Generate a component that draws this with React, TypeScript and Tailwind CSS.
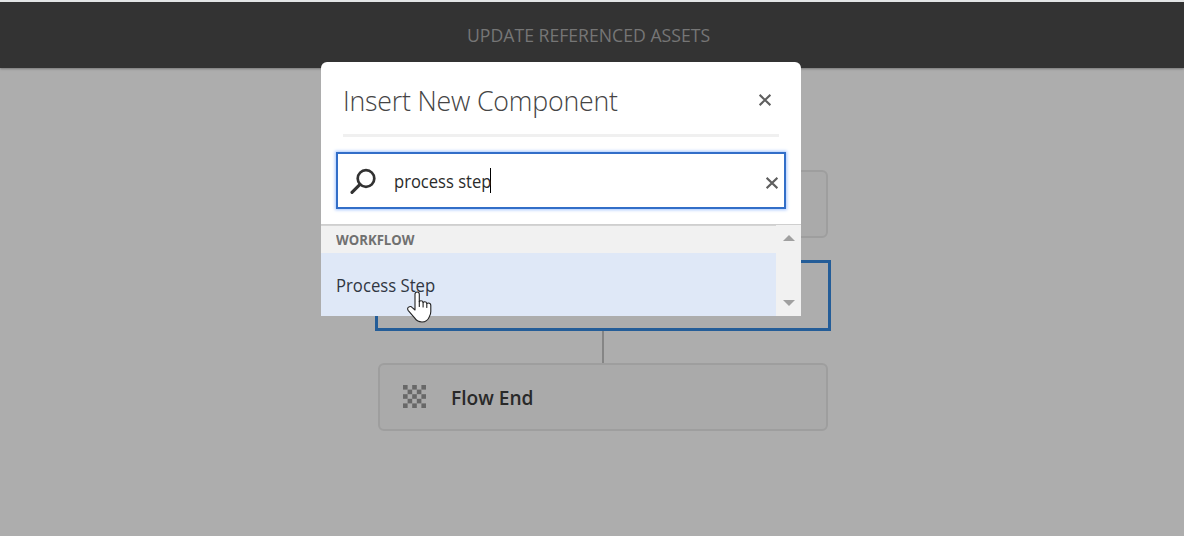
import React from "react";

function Cross() {
  return (
    <svg className="block h-3 w-3" viewBox="0 0 12 12" fill="none" stroke="#5f5f5f" strokeWidth="2.1">
      <path d="M.6.8 11.4 11.2M11.4.8.6 11.2" />
    </svg>
  );
}

function CheckeredIcon() {
  const cells: React.ReactNode[] = [];
  for (let row = 0; row < 5; row++) {
    for (let col = 0; col < 5; col++) {
      if ((row + col) % 2 === 0) {
        cells.push(<rect key={`${row}-${col}`} x={col * 4.6} y={row * 4.6} width="4.6" height="4.6" />);
      }
    }
  }
  return (
    <svg className="-mt-px h-[23px] w-[23px] shrink-0" viewBox="0 0 23 23" fill="#686868">
      {cells}
    </svg>
  );
}

function HandPointer() {
  return (
    <svg className="absolute left-[86px] top-[37px] h-[34px] w-[27px]" viewBox="0 0 27 34">
      <path
        d="M10.200 2c1.300 0 2.100.9 2.100 2.200v7.400c.4-.6 1-.8 1.700-.8 1.100 0 1.900.7 2.100 1.700.4-.5.9-.7 1.600-.7 1.200 0 1.900.8 2.100 1.700.4-.3.9-.5 1.500-.5 1.400 0 2.500 1 2.500 2.400v6.100c0 2-.5 3.500-1.400 5.100-1.400 3.600-3.700 5.400-7.400 5.400-3.400 0-5.400-1.200-7.400-4.100L1.100 20.300c-.8-1.400-.5-2.900.7-3.400 1.200-.6 2.600-.3 3.500.7L8 20V4.200C8 2.900 8.900 2 10.200 2Z"
        fill="#fff"
        stroke="#222"
        strokeWidth="1.1"
        strokeLinejoin="round"
      />
      <path d="M12.300 11.400v5M16.100 12.300v4.600M19.800 13.500v4" fill="none" stroke="#222" strokeWidth="1.100" strokeLinecap="round" />
    </svg>
  );
}

function InsertDialog() {
  return (
    <section className="absolute left-[321px] top-[62px] flex h-[254px] w-[480px] flex-col rounded-t-md bg-white">
      <header className="mx-[22px] flex h-[75px] shrink-0 items-center justify-between border-b-[3px] border-[#f0f0f0] pr-[8px] pt-[3px]">
        <h2 className="origin-left scale-x-[0.954] whitespace-nowrap text-[28px] font-light leading-10 tracking-[-0.2px] text-[#444]">
          Insert New Component
        </h2>
        <button aria-label="Close"><Cross /></button>
      </header>
      <div className="mx-[15px] mt-[15px] flex h-[57px] shrink-0 items-center border-2 border-[#326ec8] pl-[13px] pr-[6px] shadow-[0_0_3px_1px_#a9c8ff]">
        <svg className="-ml-px h-[26px] w-[26px] shrink-0" viewBox="0 0 26 26" fill="none" stroke="#323232">
          <circle cx="16" cy="10.500" r="8.300" strokeWidth="2.700" />
          <path d="M10 16.300 2 24.300" strokeWidth="3.100" strokeLinecap="round" />
        </svg>
        <div className="ml-[18px] flex grow items-center">
          <span className="w-[97px] origin-left scale-x-[0.92] whitespace-nowrap text-[18px] leading-6 text-[#2b2b2b]">process step</span>
          <span className="-ml-px h-[25px] w-px bg-black" />
        </div>
        <button aria-label="Clear" className="mt-[5px]"><Cross /></button>
      </div>
      <div className="mt-[15px] flex grow border-t border-[#cfcfcf]">
        <div className="flex grow flex-col">
          <h3 className="flex h-[28px] items-center border-t border-[#d4d4d4] bg-[#f1f1f1] pl-[15px] pt-px text-[13.5px] font-bold text-[#707070]">
            <span className="origin-left scale-x-[0.975]">WORKFLOW</span>
          </h3>
          <div className="relative flex grow items-center bg-[#dfe8f7] pl-[15px] pt-[2px] text-[18px] text-[#303642]">
            <span className="origin-left scale-x-[0.927] whitespace-nowrap">Process Step</span>
            <HandPointer />
          </div>
        </div>
        <div className="flex w-[25px] shrink-0 flex-col items-center justify-between bg-[#f1f1f1] pb-[10px] pt-[10px]">
          <svg className="h-[6px] w-[12px]" viewBox="0 0 12 6" fill="#a0a0a0"><path d="M0 6 6 0 12 6Z" /></svg>
          <svg className="h-[6px] w-[12px]" viewBox="0 0 12 6" fill="#a0a0a0"><path d="M0 0 6 6 12 0Z" /></svg>
        </div>
      </div>
    </section>
  );
}

export default function App() {
  return (
    <div className="relative flex h-[536px] w-[1184px] flex-col overflow-hidden bg-[#adadad] font-['Open_Sans','Noto_Sans',sans-serif]">
      <div className="flex h-[68px] shrink-0 border-t-2 border-[#e3e5e6] bg-[#333] pl-[467px] pt-[21px] text-[18px] leading-6 text-[#767676] shadow-[0_1px_2px_#777]">
        <span className="origin-left scale-x-[0.98] whitespace-nowrap">UPDATE REFERENCED ASSETS</span>
      </div>
      <main className="ml-[375px] flex w-[456px] flex-col items-center pt-[102px]">
        <div className="h-[68px] w-[450px] rounded-md border-2 border-[#9e9e9e] bg-[#aaa]" />
        <div className="mt-[22px] h-[71px] w-[456px] border-3 border-[#245d98] bg-[#adadad]" />
        <div className="h-[32px] w-[2px] bg-[#858585]" />
        <div className="flex h-[68px] w-[450px] items-center rounded-md border-2 border-[#9e9e9e] bg-[#aaa] pl-[23px]">
          <CheckeredIcon />
          <span className="ml-[25px] mt-[2px] origin-left scale-x-[0.98] whitespace-nowrap text-[19.5px] font-semibold text-[#292929]">Flow End</span>
        </div>
      </main>
      <InsertDialog />
    </div>
  );
}
